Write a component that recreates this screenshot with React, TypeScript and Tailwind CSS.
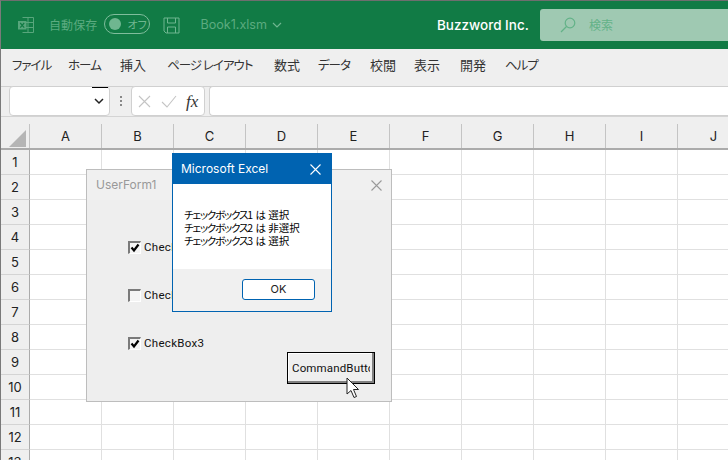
import React from "react";

const jp = "font-['Noto_Sans_CJK_JP','Noto_Sans',sans-serif] [font-feature-settings:'palt']";
const cols = ["A", "B", "C", "D", "E", "F", "G", "H", "I", "J"];
const rows = Array.from({ length: 13 }, (_, i) => i + 1);
const kana = "text-[12.5px] tracking-[-1px]";
const menu = [
  ["ファイル", "w-[56px] " + kana],
  ["ホーム", "w-[52px] " + kana],
  ["挿入", "w-[47px]"],
  ["ページ レイアウト", "w-[107px] " + kana],
  ["数式", "w-[44px]"],
  ["データ", "w-[52px] " + kana],
  ["校閲", "w-[44px]"],
  ["表示", "w-[46px]"],
  ["開発", "w-[45px]"],
  ["ヘルプ", "w-[40px] " + kana],
];

function Check({ on, label }: { on: boolean; label: string }) {
  return (
    <div className="flex items-center gap-[3px] h-[13px]">
      <div className="w-[13px] h-[13px] border-t-2 border-l-2 border-t-[#7a7a7a] border-l-[#7a7a7a] border-r border-b border-r-white border-b-white bg-[#f4f4f4] flex items-center justify-center">
        {on && (
          <svg width="10" height="10" viewBox="0 0 10 10">
            <path d="M1.5 4.5 L4 7.5 L8.5 1.5" fill="none" stroke="#000" strokeWidth="2.2" />
          </svg>
        )}
      </div>
      <span className="text-[11.5px] leading-none text-[#111] font-['Roboto',sans-serif] tracking-[0.3px] whitespace-nowrap">{label}</span>
    </div>
  );
}

function UserForm() {
  return (
    <div className="absolute left-[85px] top-[168px] w-[306px] h-[233px] border border-[#bdbdbd] bg-[#eeeeee]">
      <div className="h-[30px] bg-[#f0f0f0] flex items-center justify-between pl-[9px] pr-[8px]">
        <span className="text-[12px] text-[#999999] font-['Inter',sans-serif]">UserForm1</span>
        <svg width="13" height="13" viewBox="0 0 13 13" stroke="#9a9a9a" strokeWidth="1.1"><path d="M1.5 1.5 L11.5 11.5 M11.5 1.5 L1.5 11.5" /></svg>
      </div>
      <div className="flex flex-col gap-[35px] pl-[41px] pt-[41px]">
        <Check on label="CheckBox1" />
        <Check on={false} label="CheckBox2" />
        <Check on label="CheckBox3" />
      </div>
      <div className="absolute left-[200px] top-[182px] w-[88px] h-[32px] border border-black bg-[#efefef] shadow-[inset_-2px_-2px_0_#808080,inset_1px_1px_0_#ffffff] flex items-center pl-[4px]">
        <div className="w-[78px] overflow-hidden flex items-center text-[11.5px] leading-[14px] text-[#111] font-['Roboto',sans-serif] tracking-[0.15px] whitespace-nowrap">
          CommandButton1
        </div>
      </div>
      <svg className="absolute left-[259px] top-[207px]" width="14" height="22" viewBox="0 0 14 22">
        <path d="M1 1 L1 17 L5 13.5 L8 20.5 L10.5 19.5 L7.5 12.5 L12.5 12.5 Z" fill="#fff" stroke="#222" strokeWidth="1" />
      </svg>
    </div>
  );
}

function MsgLine({ n, rest }: { n: number; rest: string }) {
  return (
    <div>
      <span className="tracking-[-1.2px]">チェックボックス</span>
      <span>{n} は {rest}</span>
    </div>
  );
}

function MsgBox() {
  return (
    <div className="absolute left-[171px] top-[152px] w-[160px] h-[159px] border border-[#0063b1] bg-white flex flex-col">
      <div className="h-[30px] bg-[#0063b1] flex items-center justify-between pl-[8px] pr-[9px]">
        <span className="text-[12px] text-white font-['Inter',sans-serif]">Microsoft Excel</span>
        <svg width="13" height="13" viewBox="0 0 13 13" stroke="#fff" strokeWidth="1.1"><path d="M1.5 1.5 L11.5 11.5 M11.5 1.5 L1.5 11.5" /></svg>
      </div>
      <div className={`flex-1 pl-[11px] pt-[24px] text-[10.5px] leading-[13px] text-black whitespace-nowrap ${jp}`}>
        <MsgLine n={1} rest="選択" />
        <MsgLine n={2} rest="非選択" />
        <MsgLine n={3} rest="選択" />
      </div>
      <div className="h-[42px] bg-[#f0f0f0] flex items-start justify-end pt-[10px] pr-[16px]">
        <div className="w-[73px] h-[21px] bg-white border border-[#0063b1] rounded-[3px] flex items-center justify-center text-[11px] text-[#222] font-['Inter',sans-serif]">OK</div>
      </div>
    </div>
  );
}

export default function App() {
  return (
    <div className="relative w-[728px] h-[460px] overflow-hidden bg-[#efefef] border-l border-t border-l-[#7a7a7a] border-t-[#6e6e6e] flex flex-col">
      {/* title bar */}
      <div className="h-[48px] shrink-0 bg-[#117b45] flex items-center relative">
        <svg className="ml-[16px]" width="18" height="18" viewBox="0 0 18 18" fill="none" stroke="#58a67c" strokeWidth="1">
          <path d="M5.5 1.5 H16.5 V16.5 H5.5 M11 1.5 V16.5 M5.5 6.5 H16.5 M5.5 11.5 H16.5" />
          <rect x="1" y="5" width="8.5" height="8.5" fill="#58a67c" stroke="none" />
          <path d="M3.2 7 L7.2 11.6 M7.2 7 L3.2 11.6" stroke="#117b45" strokeWidth="1.2" />
        </svg>
        <span className={`ml-[14px] text-[12px] tracking-[0.1px] text-[#5cab80] ${jp}`}>自動保存</span>
        <div className="ml-[7px] w-[46px] h-[20px] -mt-[2px] rounded-full border border-[#7fbd9c] flex items-center pl-[4px]">
          <div className="w-[12px] h-[12px] rounded-full bg-[#6fb690]" />
          <span className={`ml-[6px] text-[11px] text-[#6fb690] ${jp}`}>オフ</span>
        </div>
        <svg className="ml-[13px]" width="17" height="17" viewBox="0 0 17 17" fill="none" stroke="#6fb690" strokeWidth="1">
          <path d="M1 1 H16 V16 H3 L1 14 Z M4.5 1 V6 H12.5 V1 M4.5 16 V10 H12.5 V16" />
        </svg>
        <span className="ml-[20px] text-[12.6px] text-[#5cab80] font-['Inter',sans-serif]">Book1.xlsm</span>
        <svg className="ml-[5px]" width="10" height="6" viewBox="0 0 10 6" fill="none" stroke="#6fb690" strokeWidth="1.2"><path d="M1 1 L5 5 L9 1" /></svg>
        <span className="absolute left-[436px] top-[15px] text-[13.5px] leading-[18px] font-medium text-white font-['Inter',sans-serif]">Buzzword Inc.</span>
        <div className="absolute left-[539px] top-[8px] w-[190px] h-[32px] rounded-[3px] bg-[#9fc9b2] flex items-center pl-[20px]">
          <svg width="16" height="16" viewBox="0 0 16 16" fill="none" stroke="#63b288" strokeWidth="1.2"><circle cx="10" cy="6" r="4.8" /><path d="M6.5 9.5 L1 15" /></svg>
          <span className={`ml-[13px] text-[12px] text-[#63b288] ${jp}`}>検索</span>
        </div>
      </div>
      {/* menu */}
      <div className={`h-[38px] shrink-0 flex items-center pl-[11px] pb-[5px] text-[13px] text-[#333] border-b border-b-[#d0d0d0] ${jp}`}>
        {menu.map(([m, w]) => (
          <span key={m} className={`whitespace-nowrap ${w}`}>{m}</span>
        ))}
      </div>
      {/* formula bar */}
      <div className="h-[31px] shrink-0 flex items-stretch pl-[8px] border-b border-b-[#d4d4d4] -mt-px">
        <div className="relative w-[101px] bg-white border border-[#d0d0d0] rounded-[4px] flex items-center justify-end pr-[5px]">
          <div className="absolute right-[1px] top-0 w-[16px] h-px bg-black" />
          <svg width="10" height="7" viewBox="0 0 10 7" fill="none" stroke="#222" strokeWidth="1.5"><path d="M1 1 L5 5 L9 1" /></svg>
        </div>
        <div className="w-[21px] flex flex-col items-center justify-center gap-[2px]">
          <div className="w-[2px] h-[2px] bg-[#888]" />
          <div className="w-[2px] h-[2px] bg-[#888]" />
          <div className="w-[2px] h-[2px] bg-[#888]" />
        </div>
        <div className="w-[74px] bg-white border border-[#d0d0d0] rounded-[4px] flex items-center pl-[6px]">
          <svg width="13" height="13" viewBox="0 0 13 13" fill="none" stroke="#c4c4c4" strokeWidth="1.1"><path d="M1 1 L12 12 M12 1 L1 12" /></svg>
          <svg className="ml-[10px]" width="16" height="13" viewBox="0 0 16 13" fill="none" stroke="#c4c4c4" strokeWidth="1.1"><path d="M1 7 L6 12 L15 1" /></svg>
          <span className="ml-[9px] text-[17px] leading-none italic text-[#333] font-['Liberation_Serif',serif]">fx</span>
        </div>
        <div className="ml-[4px] flex-1 bg-white border border-[#d0d0d0] rounded-l-[4px] border-r-0" />
      </div>
      {/* sheet */}
      <div className="mt-[7px] flex flex-col">
        <div className="flex h-[26px] border-b-2 border-b-[#ababab] shrink-0">
          <div className="w-[29px] h-[24px] shrink-0 flex items-end justify-end pr-[3px] pb-[1px] border-r border-r-[#c4c4c4]">
            <svg width="17" height="17" viewBox="0 0 17 17"><path d="M17 0 V17 H0 Z" fill="#b5b5b5" /></svg>
          </div>
          {cols.map((c) => (
            <div key={c} className="w-[72px] shrink-0 border-r border-r-[#c4c4c4] pt-[1px] flex items-center justify-center text-[13px] text-[#222] font-['Inter',sans-serif]">{c}</div>
          ))}
        </div>
        {rows.map((r) => (
          <div key={r} className="flex h-[25px] shrink-0">
            <div className="w-[29px] shrink-0 border-r border-r-[#ababab] border-b border-b-[#d4d4d4] pt-[1px] flex items-center justify-center text-[13px] text-[#222] font-['Inter',sans-serif]">{r}</div>
            {cols.map((c) => (
              <div key={c} className="w-[72px] shrink-0 bg-white border-r border-b border-[#e0e0e0]" />
            ))}
          </div>
        ))}
      </div>
      <UserForm />
      <MsgBox />
    </div>
  );
}
